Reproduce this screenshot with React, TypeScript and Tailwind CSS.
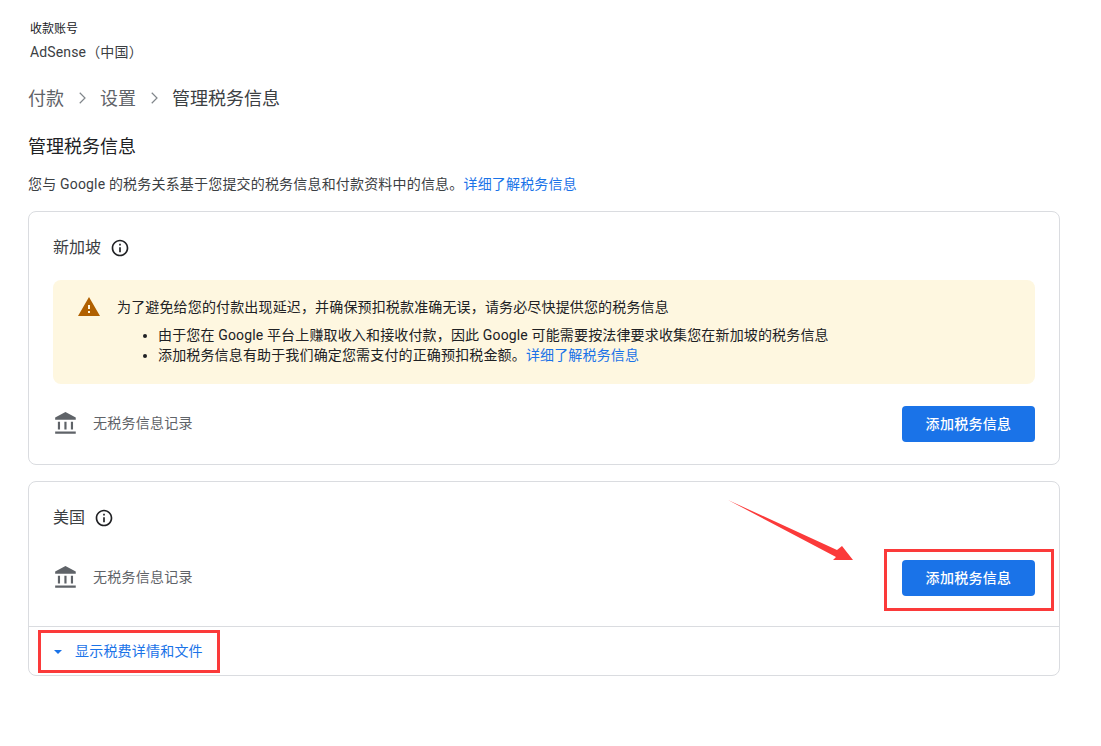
const font = "font-['Roboto','Noto_Sans_CJK_SC',sans-serif]";

function InfoIcon() {
  return (
    <svg width="20" height="20" viewBox="0 0 24 24" fill="#202124">
      <path d="M11 7h2v2h-2zm0 4h2v6h-2zm1-9C6.48 2 2 6.48 2 12s4.48 10 10 10 10-4.48 10-10S17.52 2 12 2zm0 18c-4.41 0-8-3.59-8-8s3.59-8 8-8 8 3.59 8 8-3.59 8-8 8z" />
    </svg>
  );
}

function BankIcon() {
  return (
    <svg width="26" height="26" viewBox="0 0 24 24" fill="#5f6368">
      <path d="M6.5 10h-2v7h2v-7zm6 0h-2v7h2v-7zm8.500 9H2v2h19v-2zm-2.500-9h-2v7h2v-7zM11.500 1 2 6v2h19V6l-9.500-5z" />
    </svg>
  );
}

function RecordRow() {
  return (
    <div className="flex items-center justify-between">
      <div className="flex items-center gap-[14px]">
        <BankIcon />
        <span className="text-[14px] tracking-[0.25px] text-[#5f6368] mb-[2px]">无税务信息记录</span>
      </div>
      <button className="w-[133px] h-[36px] pt-[1px] rounded-[4px] bg-[#1a73e8] text-white text-[14px] tracking-[0.3px] font-medium">
        添加税务信息
      </button>
    </div>
  );
}

export default function App() {
  return (
    <div className={`${font} relative w-[1101px] h-[746px] overflow-hidden bg-white text-[#3c4043]`}>
      <div className="pl-[28px] pr-[41px] pt-[21px]">
        {/* Account */}
        <div className="pl-[2px]">
          <div className="text-[12px] leading-[16px] text-[#202124]">收款账号</div>
          <div className="text-[14px] tracking-[0.15px] leading-[20px] mt-[5px]">AdSense（中国）</div>
        </div>

        {/* Breadcrumb */}
        <div className="flex items-center mt-[22px] h-[28px] text-[18px] text-[#5f6368]">
          <span>付款</span>
          <svg className="mx-[9px]" width="18" height="18" viewBox="0 0 24 24" fill="none" stroke="#80868b" strokeWidth="1.6">
            <path d="M9 5l7 7-7 7" />
          </svg>
          <span>设置</span>
          <svg className="mx-[9px]" width="18" height="18" viewBox="0 0 24 24" fill="none" stroke="#80868b" strokeWidth="1.6">
            <path d="M9 5l7 7-7 7" />
          </svg>
          <span className="text-[#3c4043]">管理税务信息</span>
        </div>

        <h1 className="text-[18px] leading-[28px] mt-[21px] text-[#202124]">管理税务信息</h1>
        <p className="text-[14px] tracking-[0.18px] leading-[20px] mt-[13px] text-[#3c4043]">
          您与 Google 的税务关系基于您提交的税务信息和付款资料中的信息。
          <span className="text-[#1a73e8]">详细了解税务信息</span>
        </p>

        {/* Singapore */}
        <section className="mt-[17px] h-[254px] rounded-[8px] border border-[#dadce0] px-[24px] pt-[24px]">
          <div className="flex items-center gap-[9px] h-[24px] text-[16px]">
            <span>新加坡</span>
            <InfoIcon />
          </div>
          <div className="mt-[20px] h-[104px] rounded-[8px] bg-[#fef7e0] flex pl-[24px] pt-[17px]">
            <svg className="mt-[-2px]" width="24" height="24" viewBox="0 0 24 24" fill="#b06000">
              <path d="M1 21h22L12 2 1 21zm12-3h-2v-2h2v2zm0-4h-2v-4h2v4z" />
            </svg>
            <div className="ml-[16px] text-[14px] tracking-[0.15px] leading-[20px] text-[#202124]">
              <div>为了避免给您的付款出现延迟，并确保预扣税款准确无误，请务必尽快提供您的税务信息</div>
              <ul className="list-disc pl-[41px] mt-[8px]">
                <li>由于您在 Google 平台上赚取收入和接收付款，因此 Google 可能需要按法律要求收集您在新加坡的税务信息</li>
                <li>
                  添加税务信息有助于我们确定您需支付的正确预扣税金额。
                  <span className="text-[#1a73e8]">详细了解税务信息</span>
                </li>
              </ul>
            </div>
          </div>
          <div className="mt-[22px]">
            <RecordRow />
          </div>
        </section>

        {/* United States */}
        <section className="mt-[16px] h-[195px] rounded-[8px] border border-[#dadce0]">
          <div className="px-[24px] pt-[24px] h-[145px] border-b border-[#dadce0]">
            <div className="flex items-center gap-[9px] h-[24px] text-[16px]">
              <span>美国</span>
              <InfoIcon />
            </div>
            <div className="mt-[30px]">
              <RecordRow />
            </div>
          </div>
          <div className="flex items-center h-[49px] pl-[25px] text-[14px] tracking-[0.2px] text-[#1a73e8]">
            <svg width="8" height="4" viewBox="0 0 8 4" fill="#1a73e8">
              <path d="M0 0h8L4 4z" />
            </svg>
            <span className="ml-[13px]">显示税费详情和文件</span>
          </div>
        </section>
      </div>

      {/* Annotations */}
      <div className="absolute left-[884px] top-[549px] w-[170px] h-[62px] border-[3px] border-[#fb3a3a]" />
      <div className="absolute left-[38px] top-[630px] w-[182px] h-[43px] border-[3px] border-[#fb3a3a]" />
      <svg className="absolute left-[720px] top-[495px]" width="140" height="70" viewBox="0 0 140 70" fill="#fb3a3a">
        <path d="M8 5 L117 55 L122 51 L133 65 L113 65 L116 62 Z" />
      </svg>
    </div>
  );
}
